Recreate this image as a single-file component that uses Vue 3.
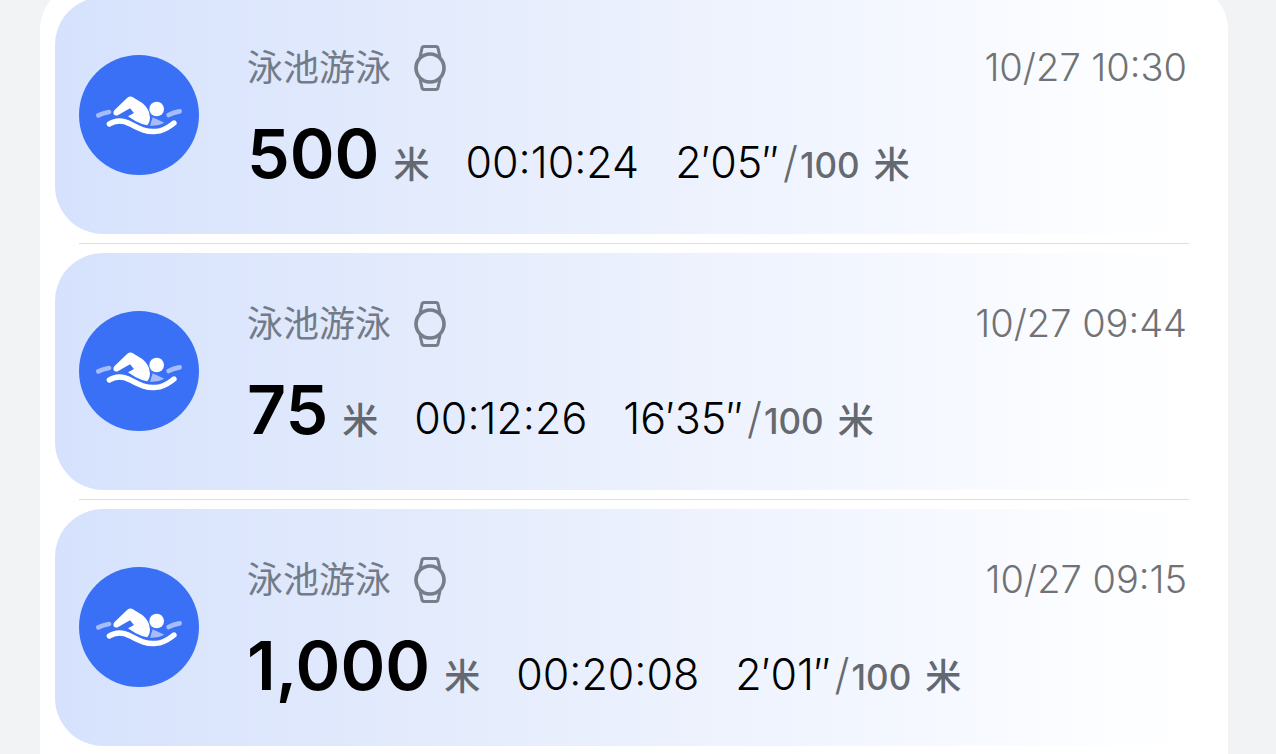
<script setup>
const records = [
  { id: 1, name: '泳池游泳', date: '10/27 10:30', distance: '500', duration: '00:10:24', pace: '2′05″' },
  { id: 2, name: '泳池游泳', date: '10/27 09:44', distance: '75', duration: '00:12:26', pace: '16′35″' },
  { id: 3, name: '泳池游泳', date: '10/27 09:15', distance: '1,000', duration: '00:20:08', pace: '2′01″' },
]
</script>

<template>
  <main class="page">
    <ul class="panel">
      <li v-for="record in records" :key="record.id" class="item">
        <article class="card">
          <svg class="sport" viewBox="0 0 360 360" aria-hidden="true">
            <circle cx="180" cy="180" r="180" fill="#3a70f6" />
            <g fill="none" stroke-linecap="round" stroke-linejoin="round">
              <path d="M58 181Q72 174 90 171" stroke="#a5bdfb" stroke-width="14" />
              <path d="M269 180Q283 172 302 169" stroke="#a5bdfb" stroke-width="14" />
              <path d="M91 207C112 193 133 195 158 209C184 223 204 232 231 229C258 227 271 214 285 204" stroke="#fff" stroke-width="16" />
            </g>
            <path d="M221 187L256 203Q238 213 213 212Z" fill="#a5bdfb" />
            <path d="M106 166L145 128Q154 121 164 128L190 144Q212 162 213 188Q213 201 205 211Q187 208 169 198Q156 190 147 184L165 174L153 160L119 179Q109 185 104 178Q101 172 106 166Z" fill="#fff" />
            <circle cx="233" cy="162" r="22" fill="#fff" />
          </svg>
          <div class="body">
            <header class="head">
              <h2 class="name">{{ record.name }}</h2>
              <svg class="watch" viewBox="0 0 32 46" aria-hidden="true">
                <g fill="none" stroke="#757e89" stroke-width="3" stroke-linejoin="round">
                  <circle cx="16" cy="23" r="14" stroke-width="3.6" />
                  <path d="M6 12L8 3.2Q8.4 1.6 10 1.6H22Q23.6 1.6 24 3.2L26 12" />
                  <path d="M6 34L8 42.8Q8.4 44.4 10 44.4H22Q23.6 44.4 24 42.8L26 34" />
                </g>
              </svg>
              <time class="date">{{ record.date }}</time>
            </header>
            <p class="stats">
              <span class="distance">{{ record.distance }}</span>
              <span class="unit">米</span>
              <span class="value">{{ record.duration }}</span>
              <span class="value">{{ record.pace }}</span>
              <span class="slash">/</span>
              <span class="per">100</span>
              <span class="unit">米</span>
            </p>
          </div>
        </article>
      </li>
    </ul>
  </main>
</template>

<style>
body {
  margin: 0;
  background: #f2f3f5;
}
</style>

<style scoped>
.page {
  box-sizing: border-box;
  height: 100vh;
  overflow: hidden;
  padding: 0 48px 0 40px;
  font-family: Inter, "Noto Sans CJK SC", sans-serif;
}
.panel {
  list-style: none;
  margin: -18px 0 0;
  padding: 15px 15px 64px;
  border-radius: 48px;
  background: #fff;
}
.item + .item::before {
  content: "";
  display: block;
  height: 1px;
  margin: 9px 24px;
  background: #dcdddf;
}
.card {
  display: flex;
  align-items: center;
  gap: 48px;
  box-sizing: border-box;
  min-height: 237px;
  padding: 0 26px 2px 24px;
  border-radius: 48px;
  background: linear-gradient(90deg, #d6e2fd 0%, #e5ecfc 36%, #f5f8ff 75%, #fdfeff 92%, #fff 100%);
}
.sport {
  flex: none;
  width: 120px;
  height: 120px;
}
.body {
  flex: 1;
  min-width: 0;
  padding-top: 24px;
}
.head {
  display: flex;
  align-items: center;
  height: 46px;
}
.name {
  margin: 0;
  padding-bottom: 6px;
  font-size: 36px;
  font-weight: 400;
  color: #727b87;
}
.watch {
  width: 32px;
  height: 46px;
  margin-left: 23px;
}
.date {
  margin-left: auto;
  padding-bottom: 2px;
  font-size: 38px;
  font-weight: 300;
  color: #707275;
}
.stats {
  display: flex;
  align-items: baseline;
  margin: 18px 0 0;
  line-height: 88px;
  white-space: nowrap;
}
.distance {
  font-size: 68px;
  font-weight: 600;
  color: #000;
}
.unit {
  margin-left: 14px;
  font-size: 36px;
  font-weight: 500;
  color: #626970;
}
.value {
  margin-left: 36px;
  font-size: 43px;
  font-weight: 300;
  color: #000;
}
.slash,
.per {
  color: #66696e;
}
.slash {
  margin-left: 4px;
  font-size: 43px;
  font-weight: 300;
}
.per {
  margin-left: 2px;
  font-size: 35px;
  font-weight: 500;
}
</style>
